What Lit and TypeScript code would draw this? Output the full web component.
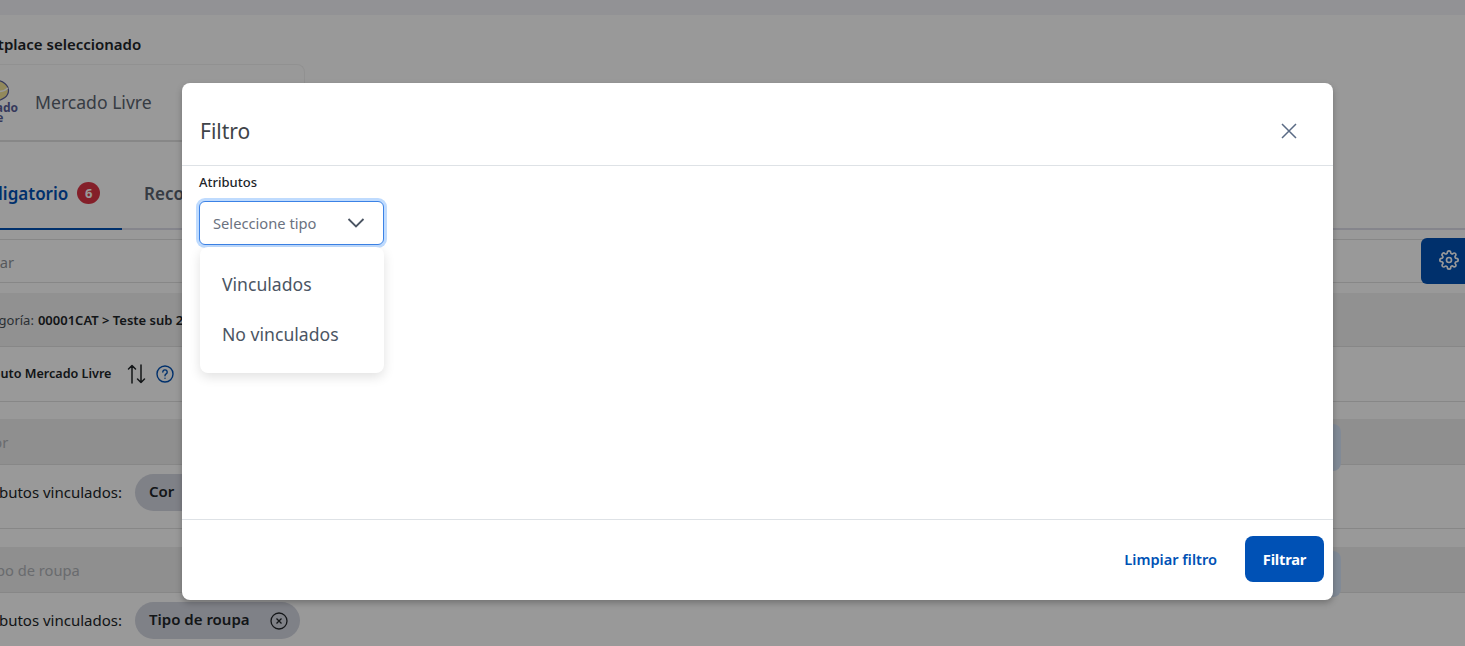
import { LitElement, html, css } from "lit";
import { customElement } from "lit/decorators.js";

@customElement("app-root")
export class AppRoot extends LitElement {
  static styles = css`
    :host { display: block; width: 1465px; height: 646px; overflow: hidden; position: relative; font-family: "Noto Sans", sans-serif; color: #212529; background: #fff; }
    .page { width: 1800px; margin-left: -49px; display: flex; flex-direction: column; }
    .topbar { height: 15px; background: #f3f4f8; flex: none; }
    .mp-title { font-size: 15px; font-weight: 600; height: 49px; padding-top: 18px; box-sizing: border-box; line-height: 22px; color: #212529; white-space: nowrap; }
    .mp-card { margin-left: 13px; width: 341px; height: 78px; box-sizing: border-box; border: 1px solid #f2f2f2; border-bottom: 2px solid #e2e2e2; border-radius: 8px 8px 0 0; display: flex; align-items: center; gap: 17px; padding-left: 9px; }
    .logo { width: 44px; height: 52px; flex: none; overflow: visible; }
    .logo text { font-family: "Noto Sans", sans-serif; font-weight: 700; font-size: 12px; fill: #5a5f9a; }
    .mp-name { font-size: 17.6px; color: #5b6470; padding-bottom: 2px; }
    .tabs { display: flex; height: 88px; border-bottom: 2px solid #dedee9; box-sizing: border-box; align-items: stretch; }
    .tab { font-size: 17px; font-weight: 600; display: flex; align-items: center; gap: 9px; padding: 14px 22px 0 0; color: #5b6470; white-space: nowrap; box-sizing: border-box; height: 88px; }
    .tab.active { color: #0051b5; border-bottom: 2px solid #0051b5; width: 171px; padding: 16px 19px 0 23px; margin-right: 22px; }
    .badge { width: 23px; height: 22px; border-radius: 50%; background: #dc3545; color: #fff; font-size: 13px; font-weight: 700; display: flex; align-items: center; justify-content: center; flex: none; }
    .search-row { height: 44px; margin-top: 9px; box-sizing: border-box; border-top: 1px solid #e2e2e2; border-bottom: 1px solid #e2e2e2; display: flex; align-items: center; position: relative; font-size: 14.7px; color: #8f959c; padding-left: 16px; padding-top: 2px; }
    .gear { position: absolute; left: 1470px; top: -2px; width: 80px; height: 46px; background: #0051b5; border-radius: 6px; display: flex; align-items: center; padding: 0 0 2px 18px; box-sizing: border-box; }
    .gap-a { height: 10px; }
    .cat { height: 54px; box-sizing: border-box; background: #f2f2f2; border-bottom: 1px solid #e2e2e2; display: flex; align-items: center; font-size: 13px; padding-left: 20px; color: #212529; }
    .cat b { font-weight: 600; margin-left: 4px; white-space: nowrap; }
    .cat span { color: #495057; }
    .head { height: 55px; box-sizing: border-box; border-bottom: 1px solid #e2e2e2; display: flex; align-items: center; padding-left: 19px; font-size: 12.6px; font-weight: 600; color: #212529; }
    .head .txt { padding-bottom: 2px; }
    .head .sort { margin-left: 15px; }
    .head .help { margin-left: 9px; }
    .gap-b { height: 17px; }
    .sec { position: relative; }
    .band { height: 46px; box-sizing: border-box; background: #eeeeee; border-bottom: 1px solid #e2e2e2; display: flex; align-items: center; font-size: 14.7px; color: #b0b3b8; padding-left: 33px; }
    .links { box-sizing: border-box; border-bottom: 1px solid #e2e2e2; height: 64px; display: flex; align-items: flex-start; padding-left: 11px; font-size: 15px; color: #212529; gap: 13px; padding-top: 9px; }
    .links .lbl { line-height: 36px; width: 160px; display: flex; justify-content: flex-end; flex: none; white-space: nowrap; }
    .chip { height: 37px; box-sizing: border-box; border-radius: 19px; background: #d4d7e1; display: flex; align-items: center; padding: 0 12px 0 14px; gap: 20px; font-size: 15px; font-weight: 600; color: #212529; white-space: nowrap; }
    .chip span { padding-bottom: 3px; }
    .side { position: absolute; left: 1300px; top: 5px; width: 90px; height: 47px; background: #d8e6fb; border-radius: 8px; }
    .side.second { top: 4px; height: 46px; }
    .gap-c { height: 18px; }
    .backdrop { position: absolute; inset: 0; background: rgba(0,0,0,.4); }
    .modal { position: absolute; left: 182px; top: 83px; width: 1151px; height: 517px; background: #fff; border-radius: 8px; box-shadow: 0 3px 6px rgba(0,0,0,.25); display: flex; flex-direction: column; color: #212529; }
    .m-head { height: 83px; box-sizing: border-box; border-bottom: 1px solid #dee2e6; display: flex; align-items: center; justify-content: space-between; padding: 27px 36px 13px 18px; flex: none; }
    .m-title { font-size: 21px; color: #3f4449; }
    .m-body { flex: 1; padding: 7px 17px 0; position: relative; }
    .lab { font-size: 13px; font-weight: 500; line-height: 18px; color: #212529; height: 18px; display: block; margin-bottom: 10px; }
    .select { width: 185px; height: 44px; box-sizing: border-box; border: 1px solid #3b82e6; border-radius: 6px; box-shadow: 0 0 0 3px #bfdbfe; display: flex; align-items: center; justify-content: space-between; padding: 0 18px 0 13px; font-size: 14.7px; color: #6b7280; background: #fff; }
    .menu { position: absolute; left: 18px; top: 81px; width: 184px; height: 126px; background: #fff; border-radius: 8px; box-shadow: 0 4px 12px rgba(0,0,0,.12); box-sizing: border-box; padding: 12px 0; display: flex; flex-direction: column; font-size: 17.6px; color: #4b5563; }
    .menu div { height: 50px; display: flex; align-items: center; padding-left: 22px; }
    .m-foot { height: 81px; box-sizing: border-box; border-top: 1px solid #dee2e6; display: flex; align-items: center; justify-content: flex-end; padding: 0 9px 2px 0; gap: 28px; flex: none; }
    .clear { font-size: 14.6px; font-weight: 600; color: #0051b5; }
    .go { width: 79px; height: 46px; border: 0; border-radius: 8px; background: #0051b5; color: #fff; font: 700 14.7px "Noto Sans", sans-serif; letter-spacing: -0.2px; }
  `;

  render() {
    const x = html`<svg width="18" height="18" viewBox="0 0 18 18" fill="none" stroke="#212529" stroke-width="1.3"><circle cx="9" cy="9" r="8"/><path d="M6.5 6.5l5 5M11.5 6.5l-5 5"/></svg>`;
    return html`
      <div class="page">
        <div class="topbar"></div>
        <div class="mp-title">Marketplace seleccionado</div>
        <div class="mp-card">
          <svg class="logo" viewBox="0 0 44 52">
            <ellipse cx="22" cy="13.5" rx="12.5" ry="10" fill="#f3e59a" stroke="#5a5f9a" stroke-width="1.2"/>
            <path d="M10 12c5 4 19 4 24-1" fill="none" stroke="#fff" stroke-width="1.6"/>
            <text x="-8" y="34.5">Mercado</text>
            <text x="0" y="45">Livre</text>
          </svg>
          <div class="mp-name">Mercado Livre</div>
        </div>
        <div class="tabs">
          <div class="tab active">Obligatorio <span class="badge">6</span></div>
          <div class="tab">Recomendado</div>
        </div>
        <div class="search-row">
          <span>Buscar</span>
          <div class="gear">
            <svg width="20" height="20" viewBox="0 0 24 24" fill="none" stroke="#fff" stroke-width="2" stroke-linecap="round" stroke-linejoin="round"><circle cx="12" cy="12" r="3"/><path d="M19.4 15a1.65 1.65 0 0 0 .33 1.82l.06.06a2 2 0 1 1-2.83 2.83l-.06-.06a1.65 1.65 0 0 0-2.82 1.17V21a2 2 0 0 1-4 0v-.09A1.65 1.65 0 0 0 9 19.4a1.65 1.65 0 0 0-1.82.33l-.06.06a2 2 0 1 1-2.83-2.83l.06-.06a1.65 1.65 0 0 0-1.17-2.82H3a2 2 0 0 1 0-4h.09A1.65 1.65 0 0 0 4.6 9a1.65 1.65 0 0 0-.33-1.82l-.06-.06a2 2 0 1 1 2.83-2.83l.06.06A1.65 1.65 0 0 0 9 4.6h.09A1.65 1.65 0 0 0 10 3.09V3a2 2 0 0 1 4 0v.09a1.65 1.65 0 0 0 1 1.51 1.65 1.65 0 0 0 1.82-.33l.06-.06a2 2 0 1 1 2.83 2.83l-.06.06A1.65 1.65 0 0 0 19.4 9v.09a1.65 1.65 0 0 0 1.51 1H21a2 2 0 0 1 0 4h-.09a1.65 1.65 0 0 0-1.51 1z"/></svg>
          </div>
        </div>
        <div class="gap-a"></div>
        <div class="cat"><span>Categoría:</span><b>00001CAT &gt; Teste sub 2</b></div>
        <div class="head">
          <span class="txt">Atributo Mercado Livre</span>
          <svg class="sort" width="20" height="20" viewBox="0 0 20 20" fill="none" stroke="#212529" stroke-width="1.5" stroke-linecap="round" stroke-linejoin="round"><path d="M5 19V1.5M1.5 5l3.5-3.5L8.500 5M14 1v17.500M10.500 15l3.500 3.500 3.500-3.500"/></svg>
          <svg class="help" width="18" height="18" viewBox="0 0 18 18" fill="none" stroke="#0051b5" stroke-width="1.4" stroke-linecap="round"><circle cx="9" cy="9" r="8"/><path d="M6.8 7a2.2 2.2 0 1 1 3.4 1.9c-.8.5-1.2 1-1.2 1.9"/><path d="M9 13.2v.1"/></svg>
        </div>
        <div class="gap-b"></div>
        <div class="sec">
          <div class="band">Cor</div>
          <div class="links"><span class="lbl">Atributos vinculados:</span><div class="chip"><span>Cor</span> ${x}</div></div>
          <div class="side"></div>
        </div>
        <div class="gap-c"></div>
        <div class="sec">
          <div class="band">Tipo de roupa</div>
          <div class="links"><span class="lbl">Atributos vinculados:</span><div class="chip"><span>Tipo de roupa</span> ${x}</div></div>
          <div class="side second"></div>
        </div>
      </div>
      <div class="backdrop"></div>
      <div class="modal">
        <div class="m-head">
          <div class="m-title">Filtro</div>
          <svg width="16" height="16" viewBox="0 0 16 16" fill="none" stroke="#5a6b85" stroke-width="1.5"><path d="M1 1l14 14M15 1L1 15"/></svg>
        </div>
        <div class="m-body">
          <label class="lab">Atributos</label>
          <div class="select">
            <span>Seleccione tipo</span>
            <svg width="18" height="12" viewBox="0 0 18 12" fill="none" stroke="#4b5563" stroke-width="1.8"><path d="M1.5 2l7.5 7.5L16.5 2"/></svg>
          </div>
          <div class="menu"><div>Vinculados</div><div>No vinculados</div></div>
        </div>
        <div class="m-foot">
          <span class="clear">Limpiar filtro</span>
          <button class="go">Filtrar</button>
        </div>
      </div>
    `;
  }
}
